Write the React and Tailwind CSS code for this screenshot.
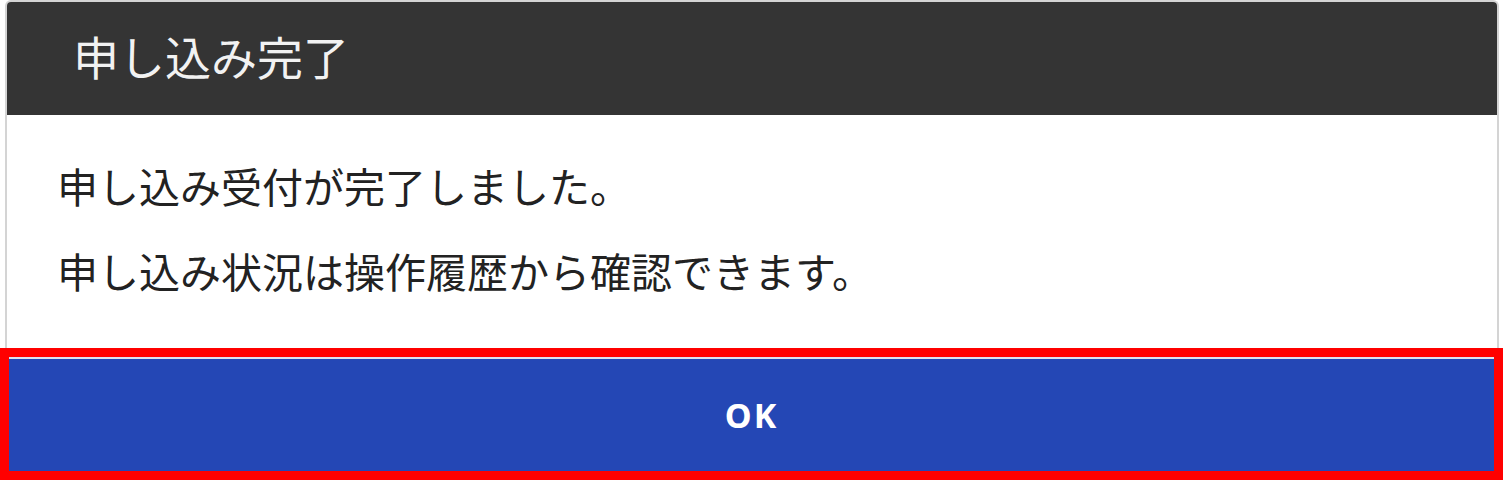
export default function App() {
  return (
    <div className="w-[1507px] h-[485px] bg-white overflow-hidden" style={{ fontFamily: '"Noto Sans CJK JP", "Noto Sans", sans-serif' }}>
      {/* Dialog */}
      <div className="ml-[5px] w-[1494px] border-x-2 border-t-2 border-[#d4d4d4] rounded-t-[6px]">
        <div className="h-[113px] bg-[#343434] rounded-t-[4px] flex items-center pl-[66px] pb-[8px]">
          <h2 className="text-[46px] leading-none text-[#f2f2f2] font-normal">申し込み完了</h2>
        </div>
        <div className="h-[233px] pt-[45px] pl-[50px] text-[41px] leading-[50px] text-[#222]">
          <p>申し込み受付が完了しました。</p>
          <p className="mt-[35px]">申し込み状況は操作履歴から確認できます。</p>
        </div>
      </div>

      {/* OK button, outlined in red */}
      <div className="w-[1503px] h-[132px] border-[9px] border-[#ff0000]">
        <div className="h-full border-t-2 border-[#dde2ee] bg-[#2447b5]">
          <button className="w-full h-full flex items-center justify-center text-white text-[34px] font-bold tracking-[2px]" style={{ fontFamily: '"Noto Sans", sans-serif' }}>
            OK
          </button>
        </div>
      </div>
    </div>
  );
}
